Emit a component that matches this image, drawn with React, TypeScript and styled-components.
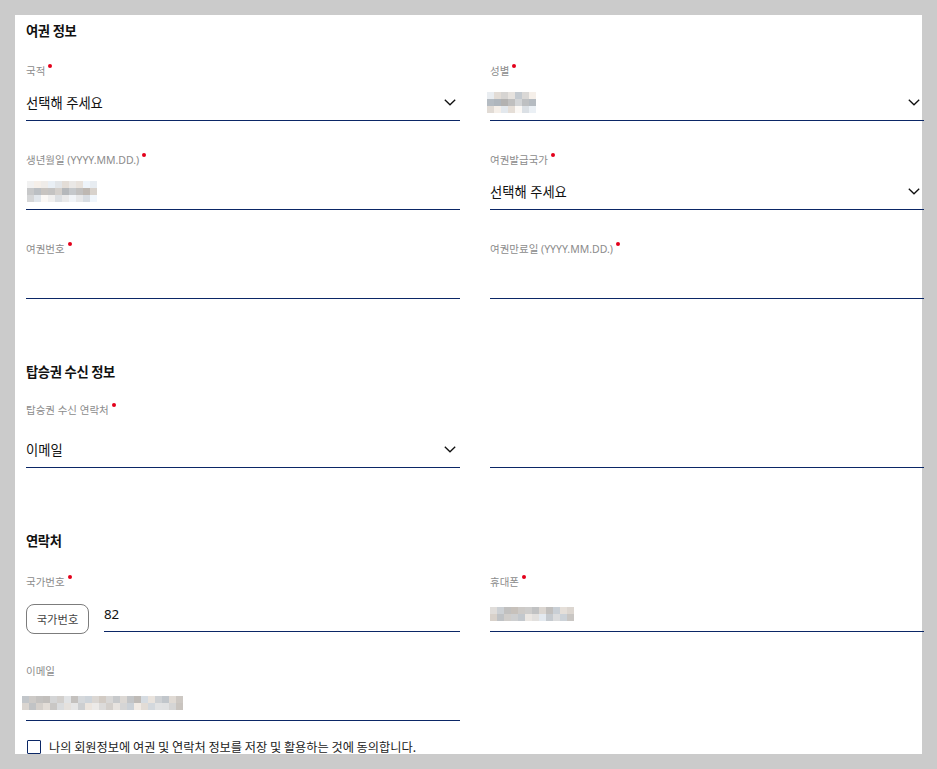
import React from "react";
import styled, { createGlobalStyle } from "styled-components";

const GlobalStyle = createGlobalStyle`
  html, body {
    margin: 0;
    padding: 0;
    background: #cbcbcb;
  }

  body {
    font-family: "Noto Sans", "Noto Sans CJK KR", sans-serif;
    color: #111;
  }
`;

const NAVY = "#0b2766";

const Panel = styled.div`
  margin: 15px 0 0 15px;
  width: 907px;
  height: 739px;
  box-sizing: border-box;
  padding: 6px 0 0 11px;
  background: #fff;
  clip-path: inset(0 -4px 0 0);
`;

const SectionTitle = styled.h2<{ $top?: number }>`
  margin: ${(p) => p.$top || 0}px 0 0 0;
  height: 20px;
  font-size: 13.3px;
  line-height: 20px;
  font-weight: 700;
  letter-spacing: -0.4px;
  color: #111;
`;

const FieldGrid = styled.div<{ $top: number }>`
  display: grid;
  grid-template-columns: 434px 434px;
  column-gap: 30px;
  row-gap: 31px;
  margin-top: ${(p) => p.$top}px;
`;

const FieldBox = styled.div`
  display: flex;
  flex-direction: column;
`;

const Label = styled.label<{ $required?: boolean; $hidden?: boolean }>`
  height: 16px;
  font-size: 10.5px;
  line-height: 16px;
  color: #8c8c8c;
  visibility: ${(p) => (p.$hidden ? "hidden" : "visible")};

  &::after {
    content: "";
    display: ${(p) => (p.$required ? "inline-block" : "none")};
    width: 4px;
    height: 4px;
    margin-left: 3px;
    border-radius: 50%;
    background: #e3001b;
    position: relative;
    top: -7px;
  }
`;

const ValueRow = styled.div<{ $gap: number }>`
  display: flex;
  align-items: center;
  height: 36px;
  box-sizing: border-box;
  margin-top: ${(p) => p.$gap}px;
  border-bottom: 1px solid ${NAVY};
`;

const ValueText = styled.span`
  flex: 1;
  font-size: 13.3px;
  line-height: 20px;
  color: #111;
`;

const ChevronIcon = styled.svg`
  flex: none;
  margin-right: 4px;
`;

const PhoneRow = styled.div`
  display: flex;
  align-items: flex-end;
  gap: 15px;
  margin-top: 6px;
`;

const CodeButton = styled.button`
  flex: none;
  width: 63px;
  height: 30px;
  margin-bottom: -2px;
  padding: 0;
  border: 1px solid #7c7c7c;
  border-radius: 8px;
  background: #fff;
  font-family: "Noto Sans CJK KR", sans-serif;
  font-size: 11.3px;
  color: #444;
`;

const CodeInput = styled(ValueRow)`
  flex: 1;
  margin-top: 0;
`;

const MosaicGrid = styled.div<{ $cols: number; $cell: number; $shift: number }>`
  display: grid;
  grid-template-columns: repeat(${(p) => p.$cols}, ${(p) => p.$cell}px);
  grid-auto-rows: ${(p) => p.$cell}px;
  margin-left: ${(p) => p.$shift}px;
`;

const MosaicCell = styled.div``;

const AgreeRow = styled.label`
  display: flex;
  align-items: center;
  gap: 8px;
  margin-top: 19px;
  height: 14px;
  font-family: "Noto Sans CJK KR", sans-serif;
  font-size: 12.2px;
  line-height: 14px;
  color: #222;
`;

const CheckBox = styled.span`
  flex: none;
  width: 12px;
  height: 12px;
  margin-left: 1px;
  border: 1.5px solid ${NAVY};
  border-radius: 1px;
`;

const Chevron = () => (
  <ChevronIcon width="12" height="7" viewBox="0 0 12 7">
    <polyline
      points="0.8,0.8 6,5.8 11.2,0.8"
      fill="none"
      stroke="#111"
      strokeWidth="1.3"
    />
  </ChevronIcon>
);

const noise = (n: number) => {
  const v = Math.sin(n * 12.9898 + 78.233) * 43758.5453;
  return v - Math.floor(v);
};

type MosaicProps = {
  cols: number;
  rows: number[];
  seed: number;
  shift?: number;
  cell?: number;
};

// blurred personal data, drawn as pixel blocks
const Mosaic: React.FC<MosaicProps> = ({ cols, rows, seed, shift = 0, cell = 7 }) => {
  const cells: React.ReactNode[] = [];
  rows.forEach((base, r) => {
    for (let c = 0; c < cols; c++) {
      const k = seed * 97 + r * 31 + c;
      const l = Math.min(248, Math.max(150, base + Math.round((noise(k) - 0.5) * 44)));
      const tint = Math.round((noise(k + 7) - 0.5) * 14);
      const color = `rgb(${l + tint}, ${l}, ${l - tint})`;
      cells.push(<MosaicCell key={`${r}-${c}`} style={{ background: color }} />);
    }
  });
  return (
    <MosaicGrid $cols={cols} $cell={cell} $shift={shift}>
      {cells}
    </MosaicGrid>
  );
};

type FieldProps = {
  label?: string;
  required?: boolean;
  gap?: number;
  chevron?: boolean;
  children?: React.ReactNode;
};

const Field: React.FC<FieldProps> = ({ label, required, gap = 6, chevron, children }) => (
  <FieldBox>
    <Label $required={required} $hidden={!label}>
      {label || "-"}
    </Label>
    <ValueRow $gap={gap}>
      <ValueText>{children}</ValueText>
      {chevron && <Chevron />}
    </ValueRow>
  </FieldBox>
);

const App: React.FC = () => {
  return (
    <>
      <GlobalStyle />
      <Panel>
        <SectionTitle>여권 정보</SectionTitle>
        <FieldGrid $top={22}>
          <Field label="국적" required chevron>
            선택해 주세요
          </Field>
          <Field label="성별" required chevron>
            <Mosaic cols={7} rows={[222, 196, 238]} seed={1} shift={-3} />
          </Field>
          <Field label="생년월일 (YYYY.MM.DD.)" required>
            <Mosaic cols={10} rows={[226, 196, 236]} seed={2} shift={1} />
          </Field>
          <Field label="여권발급국가" required chevron>
            선택해 주세요
          </Field>
          <Field label="여권번호" required />
          <Field label="여권만료일 (YYYY.MM.DD.)" required />
        </FieldGrid>

        <SectionTitle $top={63}>탑승권 수신 정보</SectionTitle>
        <FieldGrid $top={20}>
          <Field label="탑승권 수신 연락처" required gap={14} chevron>
            이메일
          </Field>
          <Field gap={14} />
        </FieldGrid>

        <SectionTitle $top={63}>연락처</SectionTitle>
        <FieldGrid $top={23}>
          <FieldBox>
            <Label $required>국가번호</Label>
            <PhoneRow>
              <CodeButton type="button">국가번호</CodeButton>
              <CodeInput $gap={0}>
                <ValueText>82</ValueText>
              </CodeInput>
            </PhoneRow>
          </FieldBox>
          <Field label="휴대폰" required>
            <Mosaic cols={12} rows={[204, 212]} seed={3} />
          </Field>
          <Field label="이메일">
            <Mosaic cols={23} rows={[206, 214]} seed={4} shift={-4} />
          </Field>
        </FieldGrid>

        <AgreeRow>
          <CheckBox />
          나의 회원정보에 여권 및 연락처 정보를 저장 및 활용하는 것에 동의합니다.
        </AgreeRow>
      </Panel>
    </>
  );
};

export default App;
